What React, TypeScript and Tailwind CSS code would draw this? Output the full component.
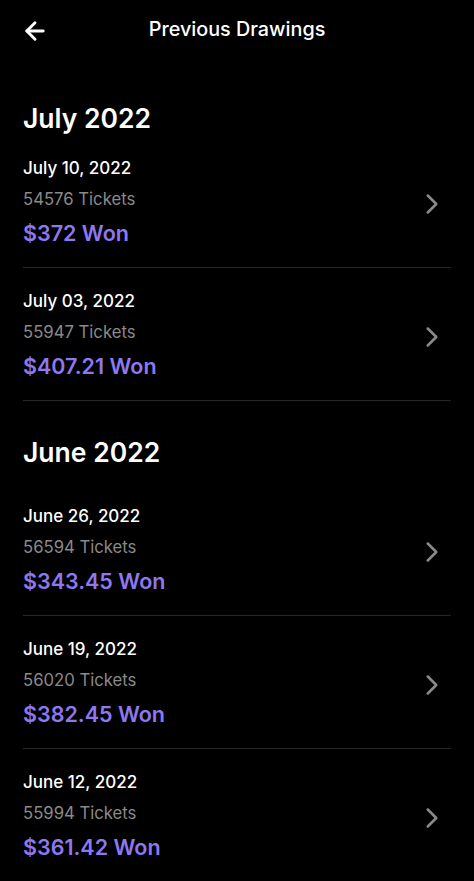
import { ArrowLeft, ChevronRight } from "lucide-react";

type Drawing = { date: string; tickets: string; won: string };

const sections: { month: string; gap: string; rows: Drawing[] }[] = [
  {
    month: "July 2022",
    gap: "mt-[41px] mb-0",
    rows: [
      { date: "July 10, 2022", tickets: "54576 Tickets", won: "$372 Won" },
      { date: "July 03, 2022", tickets: "55947 Tickets", won: "$407.21 Won" },
    ],
  },
  {
    month: "June 2022",
    gap: "mt-[34px] mb-[14px]",
    rows: [
      { date: "June 26, 2022", tickets: "56594 Tickets", won: "$343.45 Won" },
      { date: "June 19, 2022", tickets: "56020 Tickets", won: "$382.45 Won" },
      { date: "June 12, 2022", tickets: "55994 Tickets", won: "$361.42 Won" },
    ],
  },
];

function Row({ d, last }: { d: Drawing; last: boolean }) {
  return (
    <div
      className={
        "flex items-center pt-[21px] pb-[19px] " +
        (last ? "" : "border-b border-[#262626]")
      }
    >
      <div className="flex flex-1 flex-col">
        <div className="text-[17px] leading-[24px] font-medium text-white">
          {d.date}
        </div>
        <div className="mt-[7px] text-[16.7px] leading-[24px] text-[#8a8a8a]">
          {d.tickets}
        </div>
        <div className="mt-[7px] text-[21.5px] leading-[30px] font-semibold text-[#8d78f2]">
          {d.won}
        </div>
      </div>
      <ChevronRight
        className="mr-[2px] mt-[4px] text-[#8a8a8a]"
        size={34}
        strokeWidth={1.8}
      />
    </div>
  );
}

export default function App() {
  return (
    <div
      className="min-h-[881px] w-full bg-black px-[23px] text-white"
      style={{ fontFamily: "Inter, 'Noto Sans', sans-serif" }}
    >
      <header className="relative flex h-[60px] items-center justify-center">
        <ArrowLeft
          className="absolute left-[-2px] top-[17px] text-white"
          size={28}
          strokeWidth={2.5}
        />
        <h1 className="text-[19.8px] font-medium">Previous Drawings</h1>
      </header>
      {sections.map((s, si) => (
        <section key={s.month}>
          <h2
            className={
              "h-[34px] text-[26.5px] leading-[34px] font-semibold " + s.gap
            }
          >
            {s.month}
          </h2>
          {s.rows.map((r, i) => (
            <Row
              key={r.date}
              d={r}
              last={si === sections.length - 1 && i === s.rows.length - 1}
            />
          ))}
        </section>
      ))}
    </div>
  );
}
